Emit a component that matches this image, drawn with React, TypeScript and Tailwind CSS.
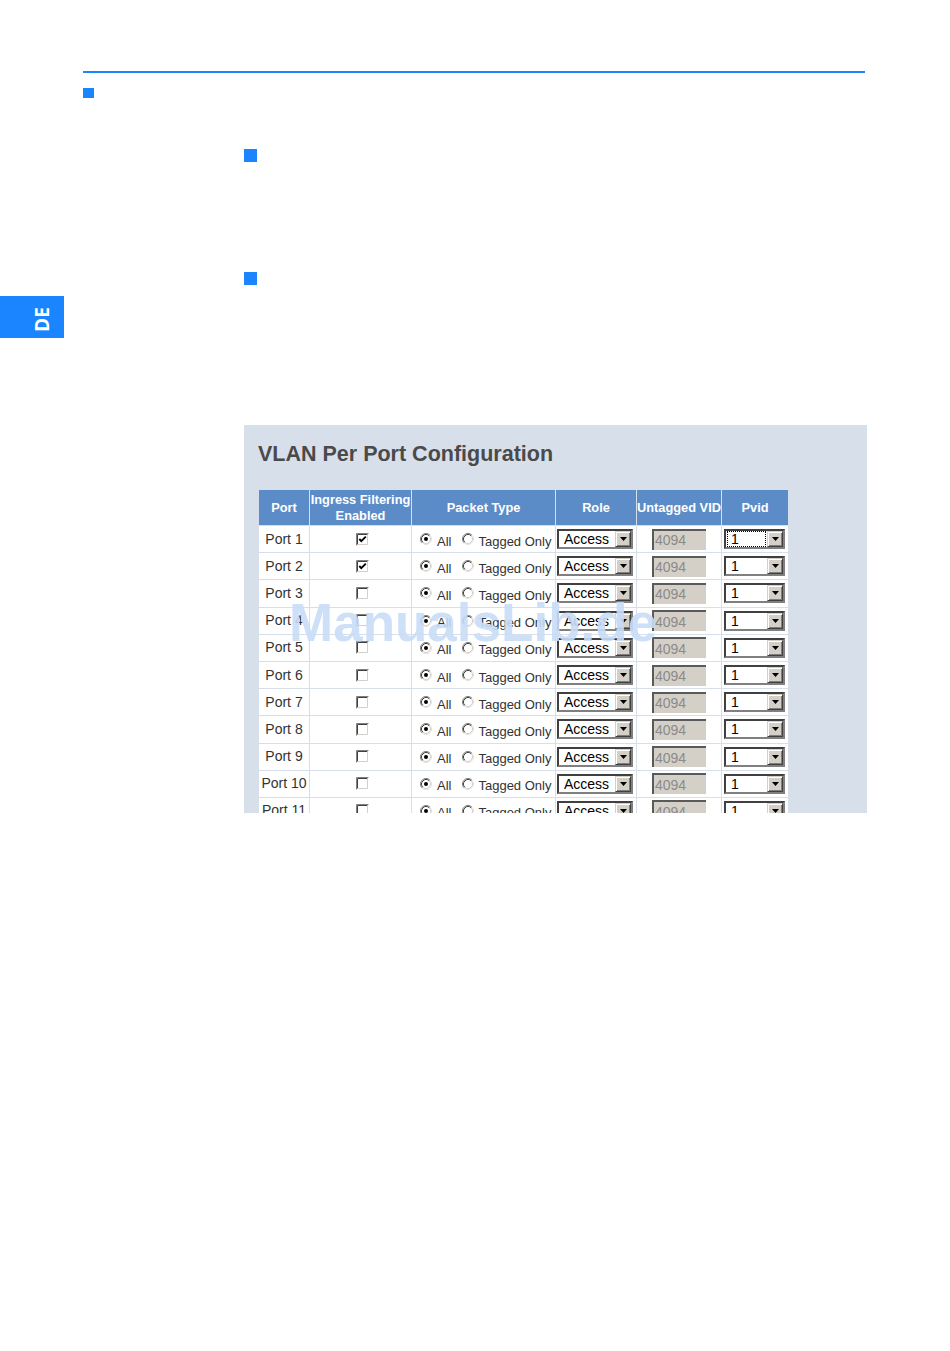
import React from "react"

const cols = "grid grid-cols-[50px_101px_143px_80px_84px_66px] gap-x-px"
const headCell =
  "flex items-center justify-center bg-[#5b8cc8] text-center text-[12.8px] font-bold leading-[16px] text-white whitespace-nowrap"
const bodyCell = "flex items-center bg-white"

const ports = Array.from({ length: 11 }, (_, i) => ({
  name: `Port ${i + 1}`,
  ingress: i < 2,
}))

function Radio({ checked }: { checked?: boolean }) {
  return (
    <svg width="12" height="12" viewBox="0 0 12 12" className="shrink-0">
      <circle cx="6" cy="6" r="5.5" fill="#fff" stroke="#e4e2dc" strokeWidth="1" />
      <path d="M2.11 9.89 A5.5 5.5 0 0 1 9.89 2.11" fill="none" stroke="#808080" strokeWidth="1" />
      <path d="M2.82 9.18 A4.5 4.5 0 0 1 9.18 2.82" fill="none" stroke="#404040" strokeWidth="1" />
      <path d="M9.18 2.82 A4.5 4.5 0 0 1 2.82 9.18" fill="none" stroke="#d4d0c8" strokeWidth="1" />
      {checked && <circle cx="6" cy="6" r="2" fill="#000" />}
    </svg>
  )
}

function Checkbox({ checked }: { checked?: boolean }) {
  return (
    <svg width="13" height="13" viewBox="0 0 13 13">
      <rect x="0" y="0" width="13" height="13" fill="#fff" />
      <path d="M0.5 12.5 V0.5 H12.5" fill="none" stroke="#808080" />
      <path d="M1.5 11.5 V1.5 H11.5" fill="none" stroke="#404040" />
      <path d="M1.5 11.5 H11.5 V1.5" fill="none" stroke="#d4d0c8" />
      {checked && (
        <polyline points="3.3,6 5.3,8.2 9.8,3.7" fill="none" stroke="#000" strokeWidth="1.9" />
      )}
    </svg>
  )
}

function DropButton() {
  return (
    <div className="flex h-[16px] w-[16px] shrink-0 items-center justify-center border border-t-[#d4d0c8] border-l-[#d4d0c8] border-r-[#404040] border-b-[#404040] bg-[#d4d0c8] shadow-[inset_1px_1px_#ffffff,inset_-1px_-1px_#808080]">
      <svg width="7" height="4" viewBox="0 0 7 4">
        <polygon points="0,0 7,0 3.5,4" fill="#000" />
      </svg>
    </div>
  )
}

function Select({
  value,
  width,
  focused,
}: {
  value: string
  width: string
  focused?: boolean
}) {
  return (
    <div
      className={`${width} flex h-[20px] items-center border-2 border-t-[#404040] border-l-[#404040] border-r-[#808080] border-b-[#808080] bg-white`}
    >
      <div
        className={
          focused
            ? "mx-px flex h-full flex-1 items-center border border-dotted border-black pl-[3px] text-[14px] leading-none text-black"
            : "mx-px flex h-full flex-1 items-center border border-transparent pl-[3px] text-[14px] leading-none text-black"
        }
      >
        {value}
      </div>
      <DropButton />
    </div>
  )
}

export default function App() {
  return (
    <div className="relative h-[1351px] w-[950px] overflow-hidden bg-white font-['Liberation_Sans',Arial,sans-serif]">
      <div className="ml-[83px] pt-[71px]">
        <div className="h-[2px] w-[782px] bg-[#1a85ff]" />
        <div className="mt-[15px] h-[10px] w-[11px] bg-[#1a85ff]" />
      </div>
      <div className="ml-[244px] mt-[51px] h-[13px] w-[13px] bg-[#1a85ff]" />
      <div className="ml-[244px] mt-[110px] h-[13px] w-[13px] bg-[#1a85ff]" />

      <div className="mt-[11px] flex h-[42px] w-[64px] items-center justify-center bg-[#1a85ff] pl-[21px] pt-[5px]">
        <span className="inline-block -rotate-90 font-['Noto_Sans',sans-serif] text-[19px] font-bold leading-[19px] text-white">
          DE
        </span>
      </div>

      <div className="ml-[244px] mt-[87px] h-[388px] w-[623px] overflow-hidden bg-[#d7dfeb] pt-[16.5px]">
        <h1 className="pl-[14px] text-[21.5px] font-bold leading-[24px] text-[#4a4a4a]">
          VLAN Per Port Configuration
        </h1>

        <div className="ml-[15px] mt-[24.5px] w-[529px]">
          <div className={`${cols} h-[35px]`}>
            <div className={headCell}>Port</div>
            <div className={headCell}>
              Ingress Filtering
              <br />
              Enabled
            </div>
            <div className={headCell}>Packet Type</div>
            <div className={headCell}>Role</div>
            <div className={headCell}>Untagged VID</div>
            <div className={headCell}>Pvid</div>
          </div>

          <div className="mt-px flex flex-col gap-y-px">
            {ports.map((p, i) => (
              <div key={p.name} className={`${cols} h-[26.2px]`}>
                <div className={`${bodyCell} justify-center text-[14px] text-[#333333] whitespace-nowrap`}>
                  {p.name}
                </div>
                <div className={`${bodyCell} justify-center pl-[3px]`}>
                  <Checkbox checked={p.ingress} />
                </div>
                <div className={`${bodyCell} pl-[8px] text-[13px] leading-[15px] text-[#333333]`}>
                  <Radio checked />
                  <span className="ml-[5px] translate-y-[2px]">All</span>
                  <span className="ml-[11px]">
                    <Radio />
                  </span>
                  <span className="ml-[4px] translate-y-[2px] whitespace-nowrap">Tagged Only</span>
                </div>
                <div className={`${bodyCell} pl-px`}>
                  <Select value="Access" width="w-[76px]" />
                </div>
                <div className={`${bodyCell} justify-center`}>
                  <div className="flex h-[21px] w-[54px] items-center border-t-2 border-l-2 border-t-[#5a5a5a] border-l-[#5a5a5a] bg-[#d4d0c8] pl-px text-[14px] leading-none text-[#8a8a8a]">
                    4094
                  </div>
                </div>
                <div className={`${bodyCell} pl-[2px]`}>
                  <Select value="1" width="w-[61px]" focused={i === 0} />
                </div>
              </div>
            ))}
          </div>
        </div>
      </div>

      <div className="pointer-events-none absolute left-[289px] top-[596px] text-[53px] font-bold leading-[53px] text-[#c8ddf7] opacity-90 whitespace-nowrap">
        ManualsLib.de
      </div>
    </div>
  )
}
